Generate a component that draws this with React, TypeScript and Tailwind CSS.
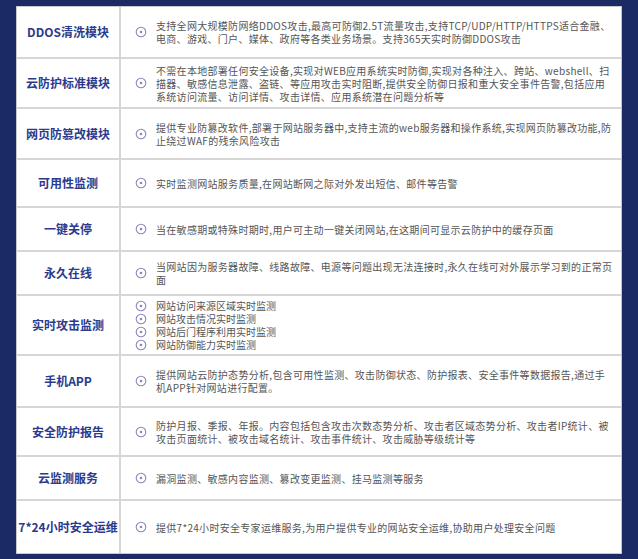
const rows: [string, string[] | string, number][] = [
  ["DDOS清洗模块", "支持全网大规模防网络DDOS攻击,最高可防御2.5T流量攻击,支持TCP/UDP/HTTP/HTTPS适合金融、电商、游戏、门户、媒体、政府等各类业务场景。支持365天实时防御DDOS攻击", 50],
  ["云防护标准模块", "不需在本地部署任何安全设备,实现对WEB应用系统实时防御,实现对各种注入、跨站、webshell、扫描器、敏感信息泄露、盗链、等应用攻击实时阻断,提供安全防御日报和重大安全事件告警,包括应用系统访问流量、访问详情、攻击详情、应用系统潜在问题分析等", 50],
  ["网页防篡改模块", "提供专业防篡改软件,部署于网站服务器中,支持主流的web服务器和操作系统,实现网页防篡改功能,防止绕过WAF的残余风险攻击", 51],
  ["可用性监测", "实时监测网站服务质量,在网站断网之际对外发出短信、邮件等告警", 48],
  ["一键关停", "当在敏感期或特殊时期时,用户可主动一键关闭网站,在这期间可显示云防护中的缓存页面", 44],
  ["永久在线", "当网站因为服务器故障、线路故障、电源等问题出现无法连接时,永久在线可对外展示学习到的正常页面", 44],
  ["实时攻击监测", ["网站访问来源区域实时监测", "网站攻击情况实时监测", "网站后门程序利用实时监测", "网站防御能力实时监测"], 60],
  ["手机APP", "提供网站云防护态势分析,包含可用性监测、攻击防御状态、防护报表、安全事件等数据报告,通过手机APP针对网站进行配置。", 52],
  ["安全防护报告", "防护月报、季报、年报。内容包括包含攻击次数态势分析、攻击者区域态势分析、攻击者IP统计、被攻击页面统计、被攻击域名统计、攻击事件统计、攻击威胁等级统计等", 49],
  ["云监测服务", "漏洞监测、敏感内容监测、篡改变更监测、挂马监测等服务", 44],
  ["7*24小时安全运维", "提供7*24小时安全专家运维服务,为用户提供专业的网站安全运维,协助用户处理安全问题", 54],
];

function Dot() {
  return (
    <svg width="12" height="12" viewBox="0 0 12 12" className="shrink-0">
      <circle cx="6" cy="6" r="4.8" fill="none" stroke="#8a86b8" strokeWidth="1.1" />
      <circle cx="6" cy="6" r="1.3" fill="#8a86b8" />
    </svg>
  );
}

export default function App() {
  return (
    <div className="w-[638px] h-[559px] bg-[#1b2a63] pt-[6px] pl-[16px]" style={{ fontFamily: '"Noto Sans CJK SC", "Noto Sans", sans-serif' }}>
      <div className="w-[606px] bg-white border border-[#c8c8c8]">
        {rows.map(([label, desc, h], i) => (
          <div key={i} className={`flex ${i > 0 ? "border-t-2 border-[#d6d6d6]" : ""}`} style={{ height: h }}>
            <div className="w-[104px] shrink-0 border-r-2 border-[#d6d6d6] flex items-center justify-center text-[12px] font-bold text-[#2b3a8c] whitespace-nowrap">
              {label}
            </div>
            <div className="flex-1 flex items-center pl-[14px] pr-[8px]">
              {Array.isArray(desc) ? (
                <div className="flex flex-col">
                  {desc.map((d, j) => (
                    <div key={j} className="flex items-center gap-[9px] h-[13px] overflow-hidden text-[10px] leading-[13px] text-[#555]">
                      <Dot />
                      <span>{d}</span>
                    </div>
                  ))}
                </div>
              ) : (
                <div className="flex items-center gap-[9px]">
                  <Dot />
                  <span className="text-[10px] leading-[13px] text-[#555] tracking-[0.3px]">{desc}</span>
                </div>
              )}
            </div>
          </div>
        ))}
      </div>
    </div>
  );
}
